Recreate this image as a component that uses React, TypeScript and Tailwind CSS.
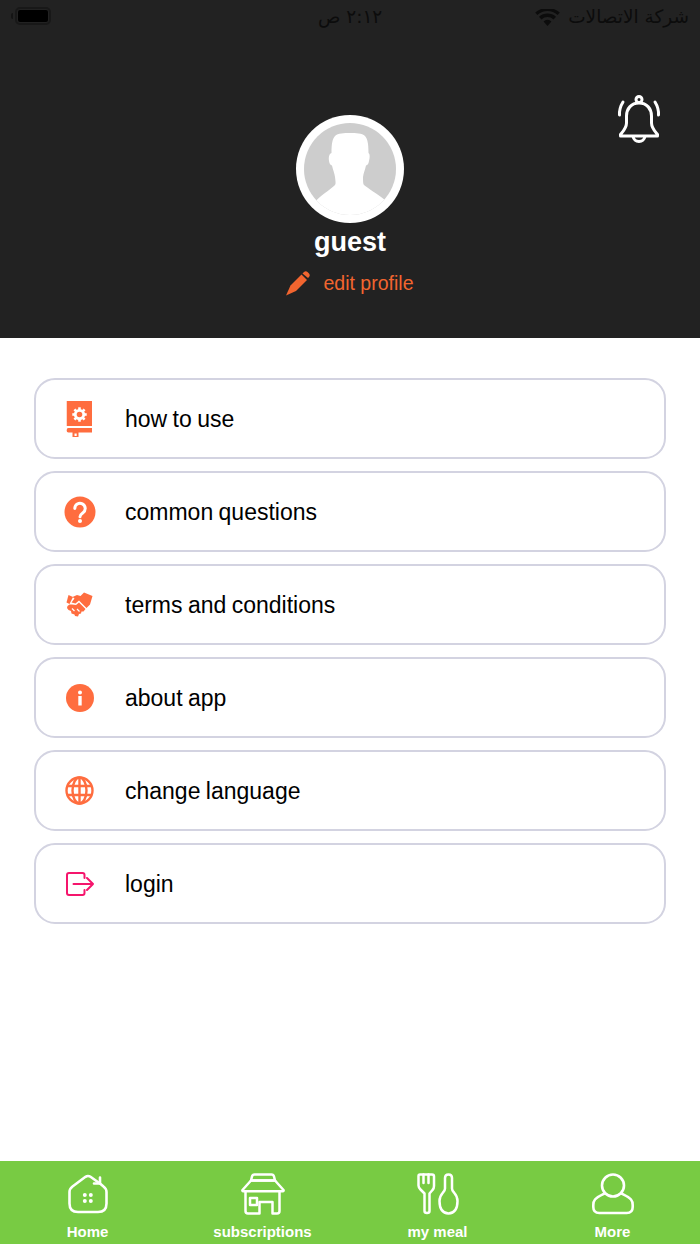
import React from "react";

const O = "#ff6d3f";

function BookIcon() {
  return (
    <svg width="26" height="36" viewBox="0 0 26 36" className="-translate-x-[0.5px]">
      <path fill={O} d="M0 0h25.500v25H0z" />
      <path fill={O} d="M2 27h23.500v4.500H2Q0 31.500 0 29.200 0 27 2 27z" />
      <path fill={O} d="M6 31h6v5.500H6z" />
      <path fill="#fff" d="M8 32.500h2.200v2.500H8z" />
      <g transform="translate(13 13.500)">
        <circle r="4.200" fill="none" stroke="#fff" strokeWidth="2.800" />
        {[0, 45, 90, 135, 180, 225, 270, 315].map((a) => (
          <rect key={a} x="-1.300" y="-7.200" width="2.600" height="2.800" fill="#fff" transform={`rotate(${a})`} />
        ))}
      </g>
    </svg>
  );
}

function QuestionIcon() {
  return (
    <svg width="32" height="32" viewBox="0 0 32 32">
      <circle cx="16" cy="16" r="15.500" fill={O} />
      <path d="M10.800 12.500a5.200 5.200 0 1 1 8.200 4.200c-2 1.500-3 2.300-3 4" fill="none" stroke="#fff" strokeWidth="3" strokeLinecap="round" />
      <circle cx="16" cy="25" r="2" fill="#fff" />
    </svg>
  );
}

function HandshakeIcon() {
  return (
    <svg width="27" height="25" viewBox="0 0 27 25">
      <path fill={O} d="M6.500 5 11 3 14.500 4 18 .5 26.500 4 24 12.500 20.500 16 13 8.500 9.500 11.500 5.500 10.500 8.500 6.500z" />
      <path fill={O} d="M2.500 3 7 5 3.500 12 .5 10.500z" />
      <path fill={O} d="M1.500 14 3.500 12.500 6 12.500 10 13 13 10.500 19.500 17 17.500 19.500 15.500 19.500 15 21.500 13 22 12 24.500 9 24 8.500 22.500 5.500 21.500 5 19 2.500 18 1 16z" />
      <path d="M6 16.500l2.500 2.500M11 17l2.500 2.500" stroke="#fff" strokeWidth="1.200" />
    </svg>
  );
}

function InfoIcon() {
  return (
    <svg width="28" height="28" viewBox="0 0 28 28">
      <circle cx="14" cy="14" r="14" fill={O} />
      <circle cx="14" cy="8.500" r="2" fill="#fff" />
      <rect x="12.300" y="12" width="3.400" height="9.500" fill="#fff" />
    </svg>
  );
}

function GlobeIcon() {
  return (
    <svg width="29" height="29" viewBox="0 0 29 29" fill="none" stroke={O} strokeWidth="2.400">
      <circle cx="14.500" cy="14.500" r="13" />
      <ellipse cx="14.500" cy="14.500" rx="7" ry="13" />
      <path d="M14.500 1.500v26M2 10h25M2 19h25" />
    </svg>
  );
}

function LoginIcon() {
  return (
    <svg width="28" height="24" viewBox="0 0 28 24" fill="none" stroke="#f5156c" strokeWidth="2" strokeLinecap="round" strokeLinejoin="round">
      <path d="M18.500 6V3q0-2-2-2H3Q1 1 1 3v18q0 2 2 2h13.500q2 0 2-2v-3" />
      <path d="M7.500 12h19.500M21 6l6 6-6 6" />
    </svg>
  );
}

function BellIcon() {
  return (
    <svg width="44" height="48" viewBox="0 0 44 48" fill="none" stroke="#fff" strokeWidth="3" strokeLinecap="round" strokeLinejoin="round">
      <circle cx="22" cy="4.500" r="3" />
      <path d="M22 8C14 8 9.500 14 9.500 21v7C9.500 33 6 36.500 3.500 39.500V41h37v-1.500C38 36.500 34.500 33 34.500 28v-7C34.500 14 30 8 22 8z" />
      <path d="M16 41.500c.8 3.300 3.200 5 6 5s5.200-1.700 6-5" />
      <path d="M6 7C3.500 11 2.300 16 2.500 20M38 7C40.500 11 41.700 16 41.500 20" />
    </svg>
  );
}

function Avatar() {
  return (
    <div className="w-[108px] h-[108px] rounded-full bg-white flex items-center justify-center">
      <svg width="92" height="92" viewBox="0 0 92 92">
        <defs>
          <clipPath id="avatarDisc">
            <circle cx="46" cy="46" r="46" />
          </clipPath>
        </defs>
        <circle cx="46" cy="46" r="46" fill="#cdcdcd" />
        <g clipPath="url(#avatarDisc)">
          <path
            fill="#fff"
            d="M27.500 30C27.500 20 28.500 16 31 13 34 10 40 10 46 10s12 0 15 3C63.500 16 64.500 20 64.500 30 66 31 66 34 65 38 64.500 41 63.500 42 62 42.500 61 47 59.500 50 59 54 59 58 59 61 60 62 65 66 72 70 81 77L92 92H0L12.700 77C20 70 27 66 31 62 32 61 31.500 58 31 54 30.500 50 29 47 28 42.500 26.500 42 25.500 41 25 38 24.500 34 25 31 27.500 30z"
          />
        </g>
      </svg>
    </div>
  );
}

function PencilIcon() {
  return (
    <svg width="25" height="25" viewBox="0 0 25 25">
      <path fill="#f2652f" d="M5.500 14.500 16.500 3.500 22 9 11 20 1 24.500z" />
      <path fill="#f2652f" d="M17.500 2.500 19 1q1.700-1.500 3.500 0L24 2.500q1.500 1.800 0 3.500l-1 1z" />
    </svg>
  );
}

function HomeIcon() {
  return (
    <svg width="40" height="40" viewBox="0 0 40 40" fill="none" stroke="#fff" strokeWidth="2.600" strokeLinecap="round" strokeLinejoin="round">
      <path d="M30.500 8.500 22.500 2.800q-2.500-1.700-5 0L4.500 12.500Q1.500 14.800 1.500 18v11.500q0 8.500 8.500 8.500h20q8.500 0 8.500-8.500V18q0-3.200-3-5.500L32 9.500" />
      <path d="M32 3.500V9.500h-6" />
      <g fill="#fff" stroke="none">
        <circle cx="16.800" cy="21" r="2" />
        <circle cx="22.800" cy="21" r="2" />
        <circle cx="16.800" cy="27" r="2" />
        <circle cx="22.800" cy="27" r="2" />
      </g>
    </svg>
  );
}

function StoreIcon() {
  return (
    <svg width="44" height="42" viewBox="0 0 44 42" fill="none" stroke="#fff" strokeWidth="2.500" strokeLinecap="round" strokeLinejoin="round">
      <path d="M13.500 1.500h17q2 0 2.500 2l1 4H10l1-4q.5-2 2.500-2z" />
      <path d="M10 7.500h24L42.500 17q.5 1.200-.8 1.200H2.300Q1 18.200 1.500 17z" />
      <path d="M4.500 18.500v19.500q0 2.500 2.500 2.500h11.500V29h13v11.500H36q2.500 0 2.500-2.500V18.500" />
      <rect x="9" y="25" width="7" height="7" />
    </svg>
  );
}

function MealIcon() {
  return (
    <svg width="42" height="42" viewBox="0 0 42 42" fill="none" stroke="#fff" strokeWidth="2.500" strokeLinecap="round" strokeLinejoin="round">
      <path d="M1.500 3q0-1.500 1.500-1.500h12q2 0 2 2V13q0 2.500-1.500 4l-3 3.500V38q0 2-2.500 2T7.500 38V20.500l-4-4Q1.500 14.500 1.500 12.500z" />
      <path d="M6.500 1.500V10M11.500 1.500V10" />
      <path d="M31.500 1.500q3.500 0 3.500 3.500v10.500q0 2 2 4 3.500 4 3.500 8.500 0 12-9 12.500-9-.5-9-12.500 0-4.500 3.500-8.500 2-2 2-4V5q0-3.500 3.500-3.500z" />
    </svg>
  );
}

function PersonIcon() {
  return (
    <svg width="42" height="42" viewBox="0 0 42 42" fill="none" stroke="#fff" strokeWidth="2.600" strokeLinecap="round" strokeLinejoin="round">
      <circle cx="21" cy="12.500" r="11" />
      <path d="M12.500 20.500c-3 1.500-7 3-9.500 6Q1.300 28.500 1.300 32v2q0 6 6 6h27.400q6 0 6-6v-2q0-3.500-1.700-5.500c-2.500-3-6.500-4.500-9.500-6" />
    </svg>
  );
}

const rows: { label: string; icon: React.ReactNode }[] = [
  { label: "how to use", icon: <BookIcon /> },
  { label: "common questions", icon: <QuestionIcon /> },
  { label: "terms and conditions", icon: <HandshakeIcon /> },
  { label: "about app", icon: <InfoIcon /> },
  { label: "change language", icon: <GlobeIcon /> },
  { label: "login", icon: <LoginIcon /> },
];

const tabs: { label: string; icon: React.ReactNode }[] = [
  { label: "Home", icon: <HomeIcon /> },
  { label: "subscriptions", icon: <StoreIcon /> },
  { label: "my meal", icon: <MealIcon /> },
  { label: "More", icon: <PersonIcon /> },
];

export default function App() {
  return (
    <div className="w-[700px] h-[1244px] flex flex-col bg-white font-['Liberation_Sans',Arial,sans-serif]">
      <header className="relative h-[338px] bg-[#222222] flex flex-col items-center">
        <div className="w-full h-[36px] pl-[11px] pr-[11px] flex items-start justify-between text-[#0c0c0c]">
          <div className="flex items-center gap-[2px] mt-[7px]">
            <div className="w-[2px] h-[6px] rounded-l-[2px] bg-[#141414]" />
            <div className="w-[36px] h-[18px] rounded-[5px] border-2 border-[#181818] px-[1px] py-[1px]">
              <div className="w-full h-full rounded-[2px] bg-black" />
            </div>
          </div>
          <span className="absolute left-[318px] top-[5px] text-[18.500px] leading-[24px] font-['DejaVu_Sans',sans-serif]" dir="rtl">٢:١٢ ص</span>
          <div className="flex items-center gap-[8px] mt-[5px]">
            <svg width="25" height="17" viewBox="0 0 26 18" fill="#0c0c0c">
              <path d="M13 18 8.800 13.200a6 6 0 0 1 8.400 0z" />
              <path d="M6.600 11 4 8.200a13.500 13.500 0 0 1 18 0L19.400 11a9.700 9.700 0 0 0-12.800 0z" />
              <path d="M2.300 6.300 0 3.800a19.500 19.500 0 0 1 26 0l-2.300 2.500a16 16 0 0 0-21.400 0z" />
            </svg>
            <span className="text-[18.500px] leading-[24px] font-['DejaVu_Sans',sans-serif]" dir="rtl">شركة الاتصالات</span>
          </div>
        </div>
        <div className="absolute right-[39px] top-[95px]">
          <BellIcon />
        </div>
        <div className="mt-[79px]">
          <Avatar />
        </div>
        <div className="mt-[2px] text-[27px] leading-[34px] font-bold text-white">guest</div>
        <div className="mt-[10px] flex items-center gap-[14px] pr-[2px]">
          <PencilIcon />
          <span className="text-[19.500px] leading-[28px] text-[#f2652f]">edit profile</span>
        </div>
      </header>

      <main className="flex-1 px-[34px] pt-[40px] flex flex-col gap-[12px]">
        {rows.map((r) => (
          <div key={r.label} className="h-[81px] rounded-[21px] border-2 border-[#d3d3e1] flex items-center">
            <div className="w-[87px] mr-[2px] flex justify-center shrink-0">{r.icon}</div>
            <span className="text-[23px] leading-[30px] text-black [word-spacing:-1px]">{r.label}</span>
          </div>
        ))}
      </main>

      <nav className="h-[83px] bg-[#78cb43] grid grid-cols-4">
        {tabs.map((t) => (
          <div key={t.label} className="flex flex-col items-center pt-[12px]">
            <div className="h-[42px] flex items-center justify-center">{t.icon}</div>
            <span className="mt-[7px] text-[15px] leading-[20px] font-bold text-white">{t.label}</span>
          </div>
        ))}
      </nav>
    </div>
  );
}
